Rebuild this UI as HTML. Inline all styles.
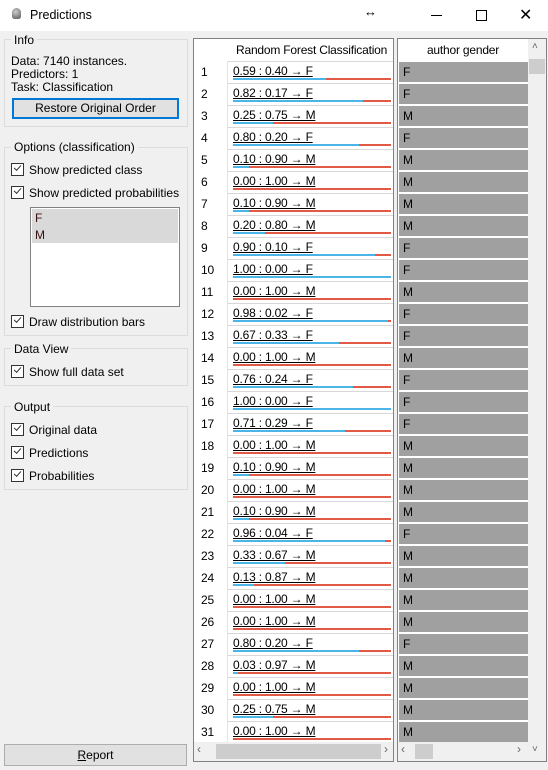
<!DOCTYPE html><html><head><style>
body{margin:0;width:548px;height:770px;background:#f0f0f0;font-family:"Liberation Sans",sans-serif;font-size:12px;color:#000;position:relative;overflow:hidden}
.a{position:absolute}
.gb{position:absolute;border:1px solid #dcdcdc;box-sizing:border-box}
.gt{position:absolute;background:#f0f0f0;padding:0 3px;font-size:12px}
.cb{position:absolute;font-size:12px;height:14px;line-height:14px;padding-left:18px}
.cb:before{content:"";position:absolute;left:0;top:0;width:11px;height:11px;border:1px solid #333;background:#fff}
.cb:after{content:"";position:absolute;left:3px;top:2px;width:6px;height:3px;border-left:1.3px solid #333;border-bottom:1.3px solid #333;transform:rotate(-48deg)}
#L,#R{letter-spacing:-0.2px}
</style></head><body>
<div class="a" style="left:0;top:0;width:548px;height:31px;background:#fff"></div>
<div class="a" style="left:12px;top:8px;width:9px;height:11px;border-radius:5px 5px 3px 3px;background:radial-gradient(circle at 40% 35%,#ccc,#555)"></div>
<div class="a" style="left:30px;top:8px;font-size:12.5px">Predictions</div>
<div class="a" style="left:364px;top:4px;font-size:13px">↔</div>
<div class="a" style="left:431px;top:15px;width:11px;height:1px;background:#000"></div>
<div class="a" style="left:476px;top:10px;width:9px;height:9px;border:1px solid #000"></div>
<div class="a" style="left:519px;top:5px;font-size:16px;font-weight:lighter">✕</div>

<div class="gb" style="left:4px;top:39px;width:184px;height:88px"></div>
<div class="gt" style="left:11px;top:33px">Info</div>
<div class="a" style="left:11px;top:55px;line-height:13px">Data: 7140 instances.<br>Predictors: 1<br>Task: Classification</div>
<div class="a" style="left:12px;top:98px;width:167px;height:21px;box-sizing:border-box;border:2px solid #0078d7;background:#e1e1e1;text-align:center;line-height:17px">Restore Original Order</div>

<div class="gb" style="left:4px;top:147px;width:184px;height:189px"></div>
<div class="gt" style="left:11px;top:140px">Options (classification)</div>
<div class="cb" style="left:11px;top:163px">Show predicted class</div>
<div class="cb" style="left:11px;top:186px">Show predicted probabilities</div>
<div class="a" style="left:30px;top:207px;width:150px;height:100px;box-sizing:border-box;border:1px solid #828282;background:#fff"></div>
<div class="a" style="left:32px;top:209px;width:146px;height:34px;background:#d9d9d9"></div>
<div class="a" style="left:35px;top:210px;color:#3a1010;line-height:17px">F<br>M</div>
<div class="cb" style="left:11px;top:315px">Draw distribution bars</div>

<div class="gb" style="left:4px;top:348px;width:184px;height:38px"></div>
<div class="gt" style="left:11px;top:342px">Data View</div>
<div class="cb" style="left:11px;top:365px">Show full data set</div>

<div class="gb" style="left:4px;top:406px;width:184px;height:84px"></div>
<div class="gt" style="left:11px;top:400px">Output</div>
<div class="cb" style="left:11px;top:423px">Original data</div>
<div class="cb" style="left:11px;top:446px">Predictions</div>
<div class="cb" style="left:11px;top:469px">Probabilities</div>

<div class="a" style="left:4px;top:744px;width:183px;height:22px;box-sizing:border-box;border:1px solid #adadad;background:#e1e1e1;text-align:center;line-height:20px"><u>R</u>eport</div>

<div class="a" style="left:193px;top:38px;width:201px;height:724px;box-sizing:border-box;border:1px solid #828282;background:#fff;overflow:hidden" id="L">
<div class="a" style="left:42px;top:4px">Random Forest Classification</div>
<div class="a" style="left:0;top:703px;width:199px;height:19px;background:#f0f0f0"></div>
<div class="a" style="left:22px;top:705px;width:165px;height:15px;background:#cdcdcd"></div>
<div class="a" style="left:3px;top:703px;font-size:12px;color:#666">&lsaquo;</div>
<div class="a" style="left:190px;top:703px;font-size:12px;color:#666">&rsaquo;</div>
</div>
<div class="a" style="left:397px;top:38px;width:150px;height:724px;box-sizing:border-box;border:1px solid #828282;background:#fff;overflow:hidden" id="R">
<div class="a" style="left:0;top:0;width:130px;height:22px;text-align:center;line-height:22px">author gender</div>
<div class="a" style="left:130px;top:0;width:18px;height:722px;background:#f0f0f0"></div>
<div class="a" style="left:131px;top:20px;width:16px;height:15px;background:#cdcdcd"></div>
<div class="a" style="left:134px;top:2px;font-size:10px;color:#666">&#708;</div>
<div class="a" style="left:134px;top:705px;font-size:10px;color:#666">&#709;</div>
<div class="a" style="left:0;top:703px;width:130px;height:19px;background:#f0f0f0"></div>
<div class="a" style="left:17px;top:705px;width:18px;height:15px;background:#cdcdcd"></div>
<div class="a" style="left:3px;top:703px;color:#666">&lsaquo;</div>
<div class="a" style="left:119px;top:703px;color:#666">&rsaquo;</div>
</div>
<script>
var p=[[.59,.40],[.82,.17],[.25,.75],[.80,.20],[.10,.90],[0,1],[.10,.90],[.20,.80],[.90,.10],[1,0],[0,1],[.98,.02],[.67,.33],[0,1],[.76,.24],[1,0],[.71,.29],[0,1],[.10,.90],[0,1],[.10,.90],[.96,.04],[.33,.67],[.13,.87],[0,1],[0,1],[.80,.20],[.03,.97],[0,1],[.25,.75],[0,1]];
var L=document.getElementById('L'),R=document.getElementById('R'),h='',r='';
p.forEach(function(v,i){var y=22+i*22;if(y>700)return;var c=v[0]>=.5?'F':'M';
h+='<div class="a" style="left:7px;top:'+(y+4)+'px">'+(i+1)+'</div>';
h+='<div class="a" style="left:33px;top:'+y+'px;width:166px;height:21px;border-top:1px solid #d8d8d8;border-left:1px solid #e4e4e4"></div>';
h+='<div class="a" style="left:39px;top:'+(y+3)+'px;text-decoration:underline">'+v[0].toFixed(2)+' : '+v[1].toFixed(2)+' &rarr; '+c+'</div>';
var w=158;h+='<div class="a" style="left:39px;top:'+(y+17)+'px;width:'+Math.round(w*v[0])+'px;height:2px;background:#4cb5e8"></div>';
h+='<div class="a" style="left:'+(39+Math.round(w*v[0]))+'px;top:'+(y+17)+'px;width:'+(w-Math.round(w*v[0]))+'px;height:2px;background:#e05a46"></div>';
r+='<div class="a" style="left:1px;top:'+(y+1)+'px;width:129px;height:20px;background:#a0a0a0;line-height:21px;padding-left:4px;box-sizing:border-box">'+c+'</div>';});
L.insertAdjacentHTML('afterbegin',h);R.insertAdjacentHTML('afterbegin',r);
</script>
</body></html>
